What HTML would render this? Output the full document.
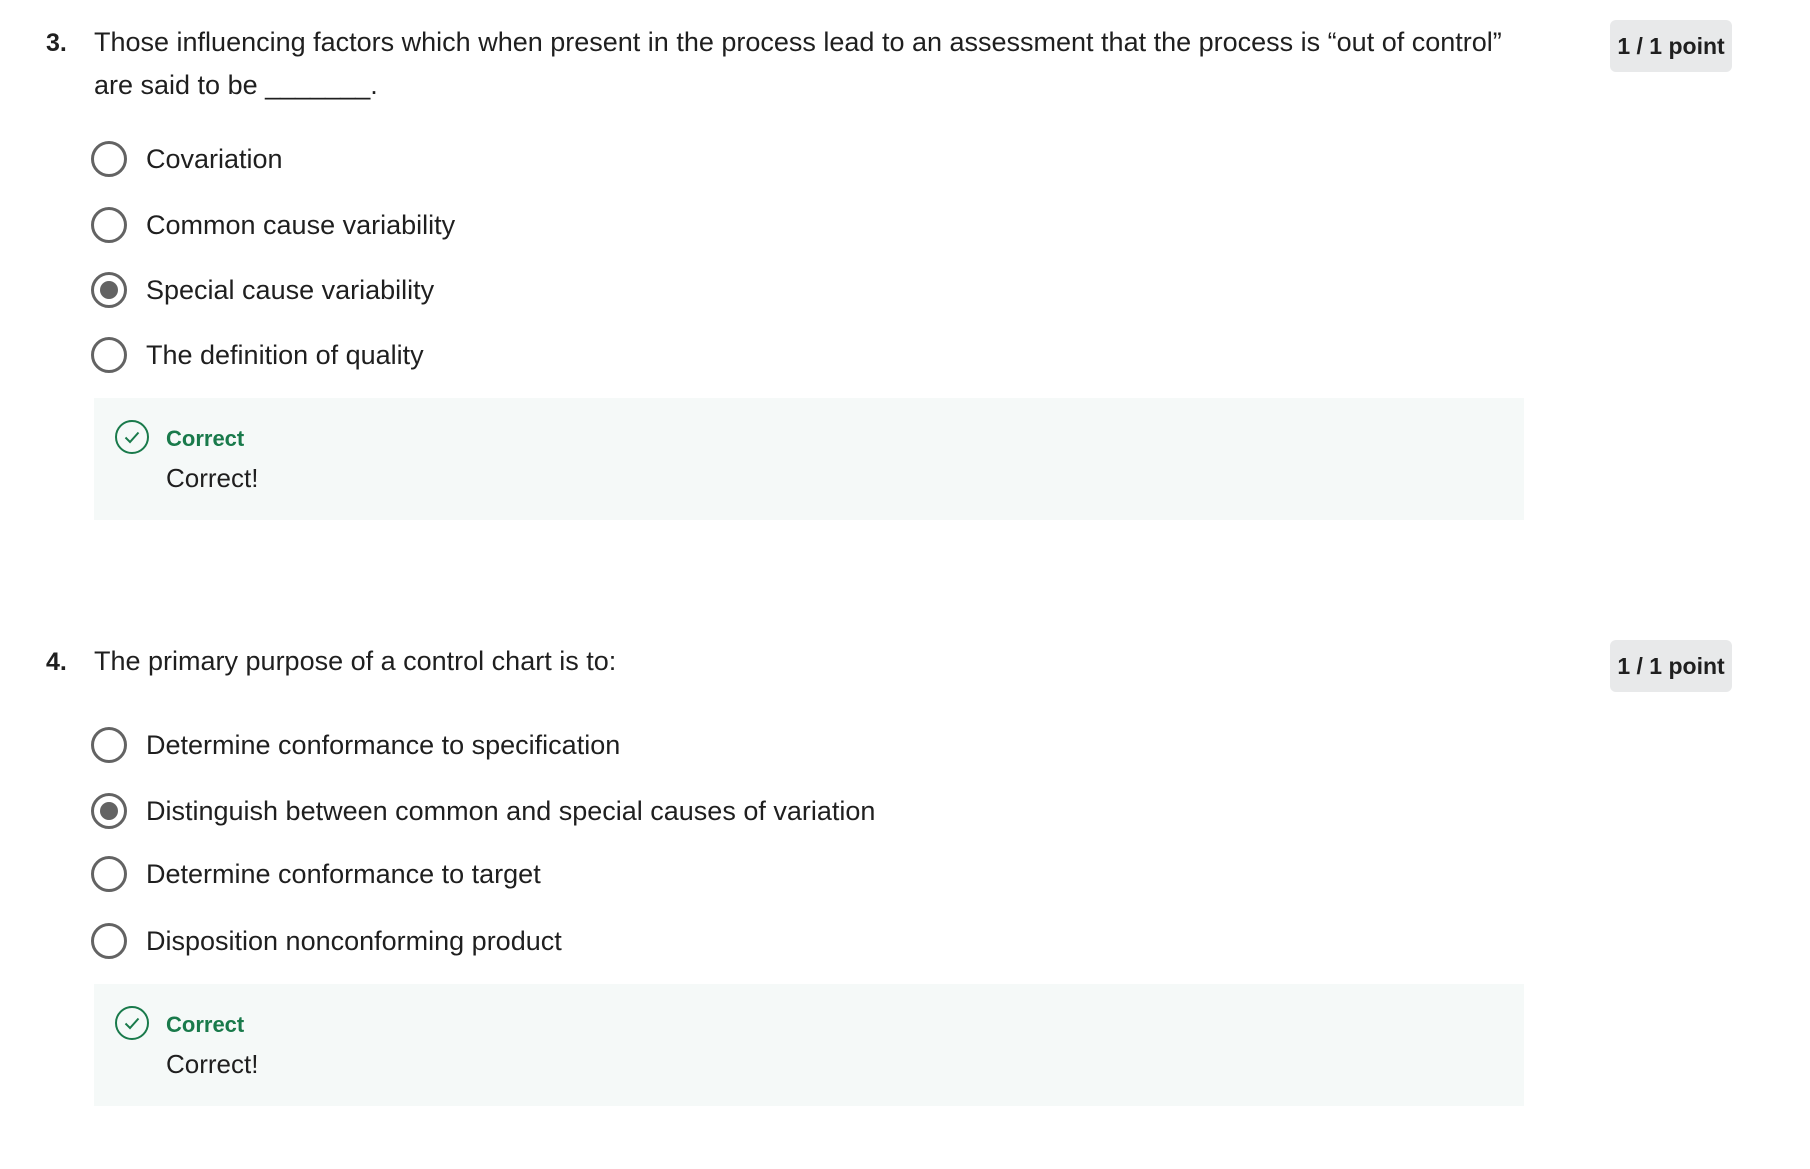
<!DOCTYPE html>
<html><head><meta charset="utf-8"><style>
body{margin:0;background:#fff;width:1810px;height:1169px;position:relative;overflow:hidden;font-family:"Liberation Sans",sans-serif;color:#1f1f1f}
.a{position:absolute;white-space:nowrap}
.q{font-size:27px;line-height:43px}
.num{font-weight:bold;font-size:25px}
.badge{position:absolute;left:1610px;width:122px;height:52px;background:#e8e9ea;border-radius:6px;font-weight:bold;font-size:23px;line-height:52px;text-align:center;color:#1f1f1f}
.r{position:absolute;left:91px;width:30px;height:30px;border:3px solid #636363;border-radius:50%;box-sizing:content-box}
.r.s::after{content:"";position:absolute;left:6px;top:6px;width:18px;height:18px;border-radius:50%;background:#636363}
.lab{position:absolute;left:146px;font-size:27px;line-height:36px;white-space:nowrap}
.box{position:absolute;left:94px;width:1430px;height:122px;background:#f5f9f8}
.ic{position:absolute;left:20px;top:21px}
.ct{position:absolute;left:72px;top:26px;font-weight:bold;font-size:22px;color:#197a4b;line-height:30px}
.cm{position:absolute;left:72px;top:63px;font-size:26px;line-height:34px}
</style></head><body>
<div class="a num" style="left:46px;top:25px;line-height:36px">3.</div>
<div class="a q" style="left:94px;top:21px">Those influencing factors which when present in the process lead to an assessment that the process is “out of control”<br>are said to be _______.</div>
<div class="badge" style="top:20px">1 / 1 point</div>
<div class="r" style="top:141px"></div><div class="lab" style="top:141px">Covariation</div>
<div class="r" style="top:207px"></div><div class="lab" style="top:207px">Common cause variability</div>
<div class="r s" style="top:272px"></div><div class="lab" style="top:272px">Special cause variability</div>
<div class="r" style="top:337px"></div><div class="lab" style="top:337px">The definition of quality</div>
<div class="box" style="top:398px">
<svg class="ic" width="36" height="36" viewBox="0 0 36 36"><circle cx="18" cy="18" r="16" fill="none" stroke="#197a4b" stroke-width="2"/><path d="M11.5 18.5l4.5 4.5 8.5-9.5" fill="none" stroke="#197a4b" stroke-width="2"/></svg>
<div class="ct">Correct</div><div class="cm">Correct!</div></div>

<div class="a num" style="left:46px;top:644px;line-height:36px">4.</div>
<div class="a q" style="left:94px;top:640px">The primary purpose of a control chart is to:</div>
<div class="badge" style="top:640px">1 / 1 point</div>
<div class="r" style="top:727px"></div><div class="lab" style="top:727px">Determine conformance to specification</div>
<div class="r s" style="top:793px"></div><div class="lab" style="top:793px">Distinguish between common and special causes of variation</div>
<div class="r" style="top:856px"></div><div class="lab" style="top:856px">Determine conformance to target</div>
<div class="r" style="top:923px"></div><div class="lab" style="top:923px">Disposition nonconforming product</div>
<div class="box" style="top:984px">
<svg class="ic" width="36" height="36" viewBox="0 0 36 36"><circle cx="18" cy="18" r="16" fill="none" stroke="#197a4b" stroke-width="2"/><path d="M11.5 18.5l4.5 4.5 8.5-9.5" fill="none" stroke="#197a4b" stroke-width="2"/></svg>
<div class="ct">Correct</div><div class="cm">Correct!</div></div>
</body></html>
